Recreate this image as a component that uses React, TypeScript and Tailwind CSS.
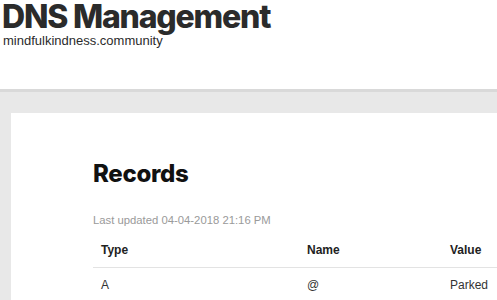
export default function App() {
  return (
    <div className="w-[497px] h-[300px] overflow-hidden bg-[#e8e8e8]" style={{ fontFamily: '"Liberation Sans", Arial, sans-serif' }}>
      <div className="h-[89px] bg-white pl-[2px] pt-[1px]">
        <h1 className="text-[32px] leading-[32px] font-extrabold text-[#2b2b2b] tracking-[-1.2px]" style={{ fontFamily: 'Inter, sans-serif' }}>DNS Management</h1>
        <div className="pl-[1px] text-[13px] leading-[15px] text-[#2b2b2b]">mindfulkindness.community</div>
      </div>
      <div className="border-t-[3px] border-[#d9d9d9] pt-[21px] pl-[11px]">
        <div className="bg-white h-[200px] pl-[82px] pt-[46px]">
          <h2 className="text-[24px] leading-[30px] font-extrabold text-[#111] tracking-[-0.3px]" style={{ fontFamily: 'Inter, sans-serif' }}>Records</h2>
          <div className="mt-[24px] text-[11.3px] leading-[14px] text-[#9a9a9a]">Last updated 04-04-2018 21:16 PM</div>
          <div className="mt-[6px] w-[500px]">
            <div className="flex h-[35px] items-center border-b border-[#e3e3e3] text-[12px] font-bold text-[#222]">
              <div className="w-[206px] pl-[8px]">Type</div>
              <div className="w-[143px] pl-[8px]">Name</div>
              <div className="pl-[8px]">Value</div>
            </div>
            <div className="flex h-[33px] items-center text-[12px] text-[#333]">
              <div className="w-[206px] pl-[8px]">A</div>
              <div className="w-[143px] pl-[8px]">@</div>
              <div className="pl-[8px]">Parked</div>
            </div>
          </div>
        </div>
      </div>
    </div>
  );
}
